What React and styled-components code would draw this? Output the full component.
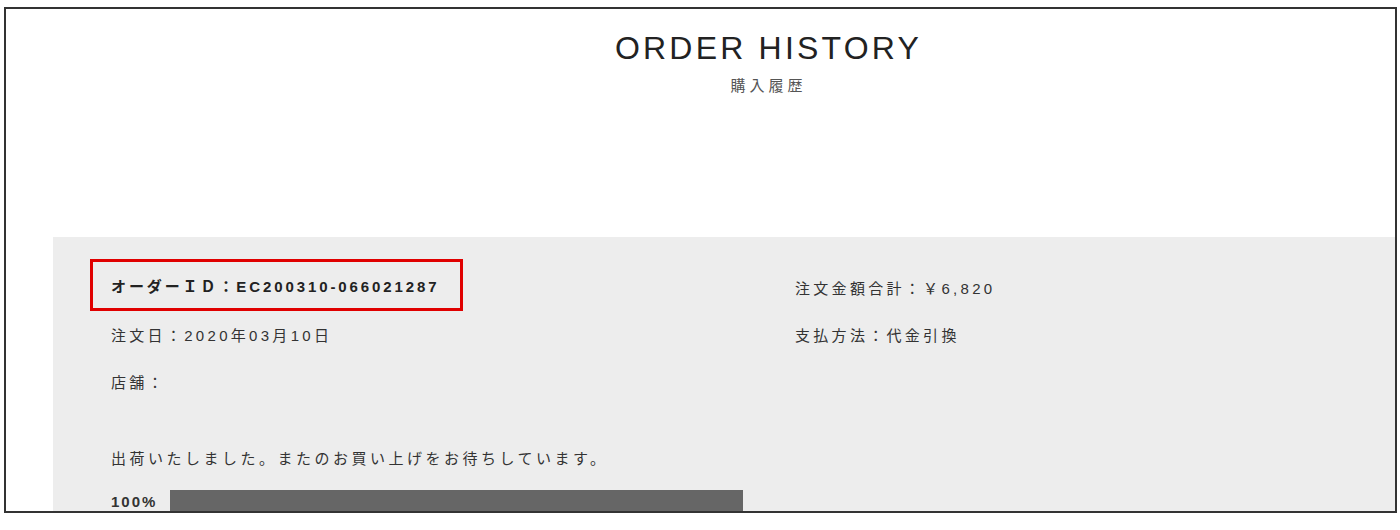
import styled, { createGlobalStyle } from 'styled-components';

const GlobalStyle = createGlobalStyle`
    html, body {
        margin: 0;
        padding: 0;
        background: #ffffff;
    }
    body {
        font-family: 'Liberation Sans', 'Noto Sans CJK JP', sans-serif;
        color: #333333;
    }
`;

function App() {
    return (
        <>
            <GlobalStyle />
            <Frame>
                <Header>
                    <Title>ORDER HISTORY</Title>
                    <SubTitle>購入履歴</SubTitle>
                </Header>
                <Panel>
                    <InfoGrid>
                        <Column>
                            <IdBox>オーダーＩＤ：EC200310-066021287</IdBox>
                            <Field $top={15}>注文日：2020年03月10日</Field>
                            <Field $top={27}>店舗：</Field>
                            <Message>出荷いたしました。またのお買い上げをお待ちしています。</Message>
                            <Progress>
                                <Percent>100%</Percent>
                                <Track>
                                    <Fill style={{ width: '100%' }} />
                                </Track>
                            </Progress>
                        </Column>
                        <Column>
                            <Field $top={20} $flush>注文金額合計：￥6,820</Field>
                            <Field $top={27} $flush>支払方法：代金引換</Field>
                        </Column>
                    </InfoGrid>
                </Panel>
            </Frame>
        </>
    );
}
export default App;

const Frame = styled.div`
    box-sizing: border-box;
    width: 1393px;
    height: 506px;
    margin: 7px 0 0 4px;
    border: 2px solid #333333;
    overflow: hidden;
    background: #ffffff;
`;

const Header = styled.header`
    height: 228px;
    padding-left: 136px;
    padding-top: 21px;
    box-sizing: border-box;
    text-align: center;
`;

const Title = styled.h1`
    margin: 0;
    font-family: 'Liberation Sans', Arial, sans-serif;
    font-weight: 400;
    font-size: 32px;
    line-height: 36px;
    letter-spacing: 3.2px;
    color: #222222;
`;

const SubTitle = styled.p`
    margin: 11px 0 0;
    font-size: 15px;
    line-height: 18px;
    letter-spacing: 4px;
    color: #555555;
`;

const Panel = styled.section`
    margin-left: 47px;
    padding: 22px 0 0 37px;
    background: #ededed;
    height: 300px;
`;

const InfoGrid = styled.div`
    display: grid;
    grid-template-columns: 705px 1fr;
`;

const Column = styled.div`
    display: flex;
    flex-direction: column;
    align-items: flex-start;
`;

const IdBox = styled.div`
    border: 3px solid #e00000;
    padding: 15px 18px 11px;
    font-size: 15px;
    line-height: 20px;
    font-weight: 700;
    letter-spacing: 2.9px;
    color: #222222;
    width: 331px;
    white-space: nowrap;
`;

const Field = styled.div`
    margin-top: ${p => p.$top}px;
    padding-left: ${p => (p.$flush ? 0 : 21)}px;
    font-size: 15px;
    line-height: 20px;
    letter-spacing: 3.3px;
    color: #333333;
`;

const Message = styled.p`
    margin: 56px 0 0;
    padding-left: 21px;
    font-size: 15px;
    line-height: 20px;
    letter-spacing: 3.5px;
    color: #333333;
`;

const Progress = styled.div`
    display: flex;
    align-items: flex-start;
    margin-top: 21px;
    padding-left: 21px;
`;

const Percent = styled.span`
    width: 59px;
    padding-top: 2px;
    font-size: 15px;
    line-height: 20px;
    font-weight: 700;
    letter-spacing: 2px;
    color: #333333;
`;

const Track = styled.div`
    width: 573px;
    height: 30px;
`;

const Fill = styled.div`
    height: 100%;
    background: #666666;
`;
